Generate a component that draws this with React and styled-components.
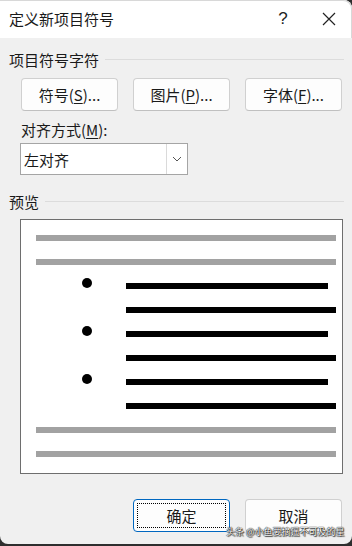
import React from 'react';
import styled, { createGlobalStyle } from 'styled-components';

const GlobalStyle = createGlobalStyle`
  html, body {
    margin: 0;
    padding: 0;
    background: #2e2e2e;
  }
  body {
    font-family: "Noto Sans CJK SC", "Noto Sans", sans-serif;
    color: #1a1a1a;
  }
`;

const Window = styled.div`
  position: relative;
  width: 352px;
  height: 544px;
  background: #f0f0f0;
  border-radius: 0 8px 8px 8px;
  overflow: hidden;
  display: flex;
  flex-direction: column;
`;

const TitleBar = styled.div`
  height: 38px;
  background: #fff;
  display: flex;
  align-items: center;
  padding-left: 9px;
  font-size: 15px;
  border-top-right-radius: 8px;
  box-shadow: inset -1px 1px 0 #d8d8d8;
`;

const Title = styled.div`
  flex: 1;
  line-height: 20px;
`;

const TitleButton = styled.div`
  width: 46px;
  height: 38px;
  display: flex;
  align-items: center;
  justify-content: center;
  color: #222;
  font-family: "Liberation Sans", sans-serif;
  font-size: 17px;
`;

const Body = styled.div`
  flex: 1;
  display: flex;
  flex-direction: column;
  padding: 11px 8px 0 9px;
`;

const GroupHeader = styled.div`
  display: flex;
  align-items: center;
  gap: 6px;
  height: 20px;
  margin-top: ${(p) => p.$mt || 0}px;
  font-size: 15px;
  &::after {
    content: '';
    flex: 1;
    height: 1px;
    background: #dcdcdc;
  }
`;

const ButtonRow = styled.div`
  display: flex;
  gap: 15px;
  margin: ${(p) => p.$mt || 0}px 0 0 ${(p) => p.$ml ?? 12}px;
`;

const Button = styled.div`
  position: relative;
  width: 97px;
  height: 33px;
  box-sizing: border-box;
  border: 1px solid ${(p) => (p.$primary ? '#0067c0' : '#d0d0d0')};
  border-bottom-color: ${(p) => (p.$primary ? '#0067c0' : '#c0c0c0')};
  border-radius: 4px;
  background: #fdfdfd;
  display: flex;
  align-items: center;
  justify-content: center;
  font-size: 15px;
  color: #1a1a1a;
  ${(p) =>
    p.$primary &&
    `&::before {
      content: '';
      position: absolute;
      inset: 3px;
      border: 1px dotted #000;
    }`}
`;

const U = styled.span`
  text-decoration: underline;
  text-underline-offset: 2px;
`;

const FieldLabel = styled.div`
  margin: 9px 0 0 12px;
  font-size: 15px;
  line-height: 20px;
`;

const Select = styled.div`
  margin: 3px 0 0 11px;
  width: 168px;
  height: 32px;
  box-sizing: border-box;
  border: 1px solid #a5a5a5;
  background: #fff;
  display: flex;
  font-size: 15px;
`;

const SelectValue = styled.div`
  flex: 1;
  display: flex;
  align-items: center;
  padding-left: 3px;
`;

const SelectArrow = styled.div`
  width: 20px;
  border-left: 1px solid #dadada;
  display: flex;
  align-items: center;
  justify-content: center;
`;

const Preview = styled.div`
  margin: 8px 0 0 11px;
  width: 323px;
  height: 255px;
  box-sizing: border-box;
  border: 1px solid #6e6e6e;
  background: #fff;
  padding: 15px 6px 0 15px;
  display: flex;
  flex-direction: column;
  gap: 18px;
`;

const Line = styled.div`
  position: relative;
  display: flex;
  height: 6px;
  padding-left: ${(p) => (p.$indent ? 90 : 0)}px;
  padding-right: ${(p) => (p.$short ? 8 : 0)}px;
  &::after {
    content: '';
    flex: 1;
    background: ${(p) => (p.$gray ? '#a2a2a2' : '#000')};
  }
`;

const Dot = styled.span`
  position: absolute;
  left: 46px;
  top: -5px;
  width: 10px;
  height: 10px;
  border-radius: 50%;
  background: #000;
`;

const Footer = styled.div`
  margin-top: 25px;
  display: flex;
  justify-content: flex-end;
  padding-right: 2px;
`;

const Watermark = styled.div`
  position: absolute;
  left: 226px;
  top: 526px;
  font-size: 9px;
  line-height: 12px;
  white-space: nowrap;
  color: #fff;
  text-shadow: 0 0 1px #000, 0 0 1px #000, 1px 1px 1px #333;
`;

const rows = [
  { gray: true },
  { gray: true },
  { bullet: true, short: true },
  {},
  { bullet: true, short: true },
  {},
  { bullet: true, short: true },
  {},
  { gray: true },
  { gray: true },
];

export default function App() {
  return (
    <Window>
      <GlobalStyle />
      <TitleBar>
        <Title>定义新项目符号</Title>
        <TitleButton>?</TitleButton>
        <TitleButton>
          <svg width="14" height="14" viewBox="0 0 14 14">
            <path d="M1 1L13 13M13 1L1 13" stroke="#222" strokeWidth="1.2" />
          </svg>
        </TitleButton>
      </TitleBar>
      <Body>
        <GroupHeader>项目符号字符</GroupHeader>
        <ButtonRow $mt={9}>
          <Button>符号(<U>S</U>)...</Button>
          <Button>图片(<U>P</U>)...</Button>
          <Button>字体(<U>F</U>)...</Button>
        </ButtonRow>
        <FieldLabel>对齐方式(<U>M</U>):</FieldLabel>
        <Select>
          <SelectValue>左对齐</SelectValue>
          <SelectArrow>
            <svg width="10" height="6" viewBox="0 0 10 6">
              <path d="M1 1L5 5L9 1" stroke="#555" strokeWidth="1" fill="none" />
            </svg>
          </SelectArrow>
        </Select>
        <GroupHeader $mt={16}>预览</GroupHeader>
        <Preview>
          {rows.map((r, i) => (
            <Line key={i} $gray={r.gray} $indent={!r.gray} $short={r.short}>
              {r.bullet && <Dot />}
            </Line>
          ))}
        </Preview>
        <Footer>
          <ButtonRow $ml={0}>
            <Button $primary>确定</Button>
            <Button>取消</Button>
          </ButtonRow>
        </Footer>
      </Body>
      <Watermark>头条 @小鱼要摘遥不可及的星</Watermark>
    </Window>
  );
}
